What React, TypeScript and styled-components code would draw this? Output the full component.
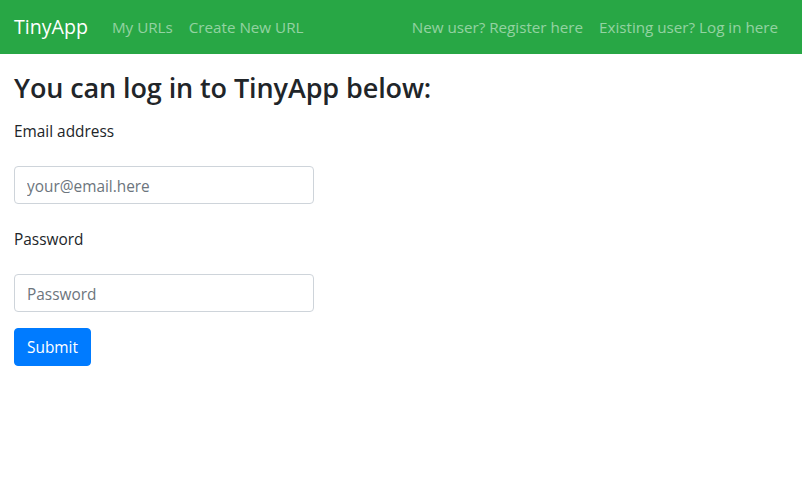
import React from "react";
import styled, { createGlobalStyle } from "styled-components";

const Global = createGlobalStyle`
  html, body { margin: 0; padding: 0; background: #fff; }
  body {
    font-family: "Open Sans", "Noto Sans", sans-serif;
    font-size: 15.4px;
    line-height: 24px;
    color: #212529;
  }
  * { box-sizing: border-box; }
`;

const Navbar = styled.nav`
  display: flex;
  align-items: center;
  justify-content: space-between;
  height: 54px;
  padding: 0 16px 0 14px;
  background: #28a745;
`;

const Brand = styled.a`
  font-size: 19.6px;
  line-height: 30px;
  color: #fff;
  margin-right: 16px;
  text-decoration: none;
`;

const NavGroup = styled.div`
  display: flex;
  align-items: center;
`;

const NavLink = styled.a`
  padding: 8px;
  font-size: 15.2px;
  line-height: 24px;
  color: rgba(255, 255, 255, 0.5);
  text-decoration: none;
`;

const Main = styled.main`
  padding: 17px 14px;
`;

const Heading = styled.h3`
  margin: 0 0 14px;
  font-size: 27px;
  font-weight: 600;
  line-height: 34px;
  letter-spacing: -0.1px;
`;

const Form = styled.form`
  display: flex;
  flex-direction: column;
  align-items: flex-start;
`;

const Label = styled.label`
  display: block;
  padding-top: 1px;
  margin-bottom: 22px;
`;

const Input = styled.input`
  display: block;
  width: 300px;
  height: 38px;
  padding: 7px 12px 5px;
  margin-bottom: 23px;
  font: inherit;
  color: #495057;
  border: 1px solid #ced4da;
  border-radius: 4px;
  &::placeholder { color: #6c757d; }
  &:last-of-type { margin-bottom: 16px; }
`;

const Button = styled.button`
  height: 38px;
  padding: 7px 12px 5px;
  font: inherit;
  color: #fff;
  background: #007bff;
  border: 1px solid #007bff;
  border-radius: 4px;
`;

export default function App() {
  return (
    <>
      <Global />
      <Navbar>
        <NavGroup>
          <Brand href="#">TinyApp</Brand>
          <NavLink href="#">My URLs</NavLink>
          <NavLink href="#">Create New URL</NavLink>
        </NavGroup>
        <NavGroup>
          <NavLink href="#">New user? Register here</NavLink>
          <NavLink href="#">Existing user? Log in here</NavLink>
        </NavGroup>
      </Navbar>
      <Main>
        <Heading>You can log in to TinyApp below:</Heading>
        <Form>
          <Label htmlFor="email">Email address</Label>
          <Input id="email" type="email" placeholder="your@email.here" />
          <Label htmlFor="password">Password</Label>
          <Input id="password" type="password" placeholder="Password" />
          <Button type="submit">Submit</Button>
        </Form>
      </Main>
    </>
  );
}
